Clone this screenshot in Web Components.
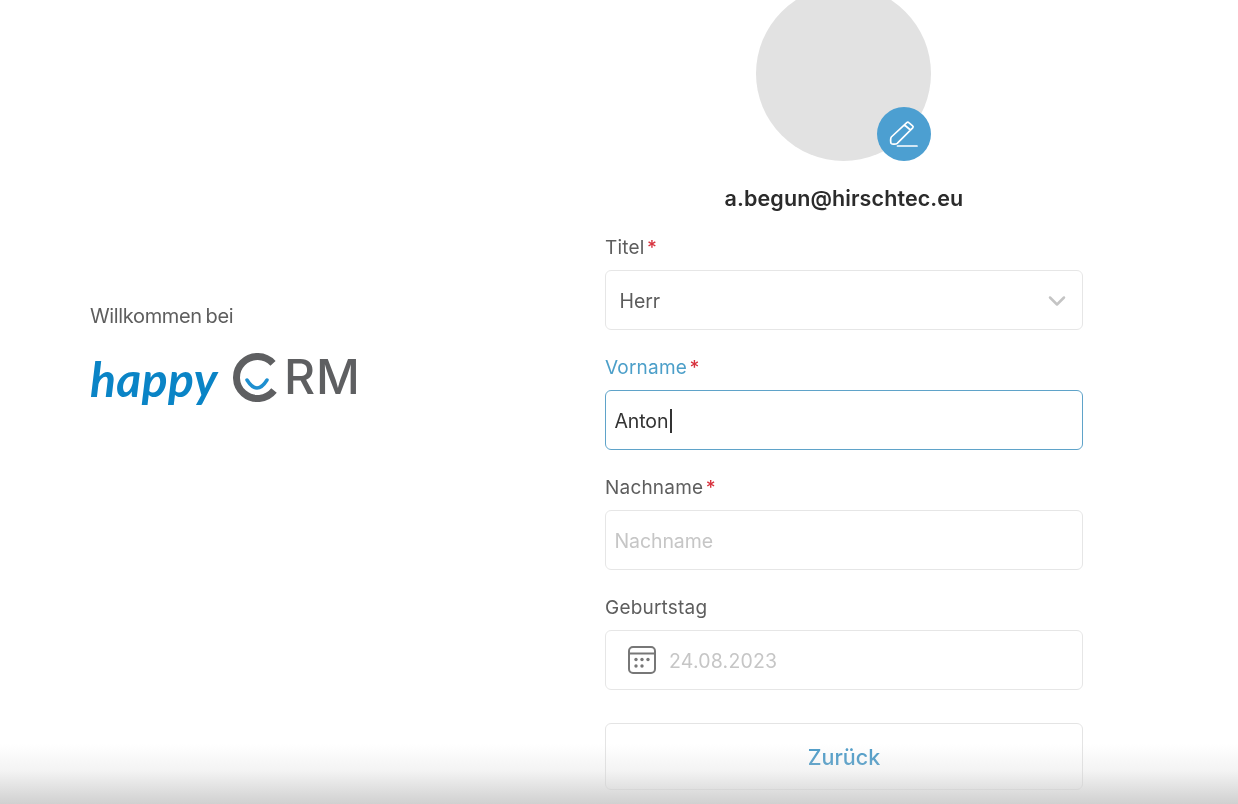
<!DOCTYPE html>
<html lang="de"><head><meta charset="utf-8"><title>happy CRM</title>
<style>
html,body{margin:0;height:100%;background:#fff;overflow:hidden}
body{font-family:Inter,"Noto Sans",sans-serif;color:#555}
</style></head><body>
<crm-page>
  <brand-panel slot="left"></brand-panel>
  <avatar-edit slot="right" email="a.begun@hirschtec.eu"></avatar-edit>
  <form-field slot="right" label="Titel" required kind="select" value="Herr"></form-field>
  <form-field slot="right" label="Vorname" required kind="focus" value="Anton"></form-field>
  <form-field slot="right" label="Nachname" required kind="placeholder" value="Nachname"></form-field>
  <form-field slot="right" label="Geburtstag" kind="date" value="24.08.2023"></form-field>
  <back-button slot="right">Zurück</back-button>
</crm-page>
<script>
function def(name, html){
  customElements.define(name, class extends HTMLElement{
    connectedCallback(){
      if(this.shadowRoot) return;
      this.attachShadow({mode:'open'}).innerHTML = typeof html==='function'?html(this):html;
    }
  });
}
def('crm-page',`<style>
:host{display:flex;width:1238px;height:804px;position:relative;overflow:hidden;background:#fff}
.l{flex:0 0 515px;padding:304px 0 0 90px;filter:blur(.3px)}
.r{flex:0 0 478px;display:flex;flex-direction:column;margin-top:-14px;filter:blur(.3px)}
.fade{position:absolute;left:0;right:0;bottom:0;height:60px;pointer-events:none;
background:linear-gradient(to bottom,rgba(208,208,208,0),rgba(208,208,208,.25) 45%,rgba(208,208,208,1))}
</style><div class="l"><slot name="left"></slot></div><div class="r"><slot name="right"></slot></div><div class="fade"></div>`);

def('brand-panel',`<style>
:host{display:block;width:300px}
.w{font-size:20px;line-height:24px;color:#5e5e5e;letter-spacing:-.35px;word-spacing:-1.500px}
.logo{display:flex;align-items:flex-start;height:60px;margin-top:20px}
.h{font:italic 700 48px/60px "Lato",sans-serif;color:#0a84c6;width:143px;letter-spacing:.4px;margin-top:1px}
svg{flex:none;display:block;margin-top:5px}
.rm{font:500 48px/60px Inter,sans-serif;color:#5e5f61;letter-spacing:1px;margin-left:5px;margin-top:-1px}
</style><div class="w">Willkommen bei</div>
<div class="logo"><span class="h">happy</span>
<svg width="46" height="50" viewBox="0 0 46 50"><path d="M40 10.300A21 21 0 1 0 41 37.500" fill="none" stroke="#5e5f61" stroke-width="7"/><path d="M14 27q10 16 20 0" fill="none" stroke="#1e8fd0" stroke-width="3.500" stroke-linecap="round"/></svg>
<span class="rm">RM</span></div>`);

def('avatar-edit',el=>`<style>
:host{display:flex;flex-direction:column;align-items:center;height:251px}
.c{width:175px;height:175px;border-radius:50%;background:#e2e2e2;position:relative;margin-right:1px}
.b{position:absolute;right:0;bottom:0;width:54px;height:54px;border-radius:50%;background:#4c9fd1;display:flex;align-items:center;justify-content:center}
.m{margin-top:24px;font-size:21.500px;line-height:26px;font-weight:600;color:#2b2b2b;letter-spacing:.1px}
</style><div class="c"><div class="b"><svg width="30" height="30" viewBox="0 0 30 30" fill="none" stroke="#fff" stroke-width="1.700" stroke-linecap="round" stroke-linejoin="round"><path d="M2.300 18 17.800 3.600a1.500 1.500 0 0 1 2 0l3.800 3.200a1.500 1.500 0 0 1 .1 2.100L8.200 24.300c-1.200 1-5 1.200-6 .2-.8-.9-.8-5.500.1-6.500zM15.500 6l6 5"/><path d="M8.500 27H28"/></svg></div></div>
<div class="m">${el.getAttribute('email')}</div>`);

def('form-field',el=>{
 const k=el.getAttribute('kind'),v=el.getAttribute('value'),req=el.hasAttribute('required');
 let inner='';
 if(k==='select') inner=`<span class="v sel">${v}</span><svg class="chev" width="18" height="12" viewBox="0 0 18 12" fill="none" stroke="#c4c4c4" stroke-width="2.500" stroke-linecap="round" stroke-linejoin="round"><path d="M2 2.500l7 7 7-7"/></svg>`;
 if(k==='focus') inner=`<span class="v foc">${v}</span><i class="caret"></i>`;
 if(k==='placeholder') inner=`<span class="v ph">${v}</span>`;
 if(k==='date') inner=`<svg class="cal" width="28" height="28" viewBox="0 0 28 28" fill="none" stroke="#777" stroke-width="2"><rect x="1" y="1" width="26" height="26" rx="4"/><path d="M1 7.500h26"/><g fill="#777" stroke="none"><circle cx="8" cy="13.500" r="1.700"/><circle cx="14" cy="13.500" r="1.700"/><circle cx="20" cy="13.500" r="1.700"/><circle cx="8" cy="20" r="1.700"/><circle cx="14" cy="20" r="1.700"/></g></svg><span class="v ph date">${v}</span>`;
 return `<style>
:host{display:block;height:120px}
label{display:block;font-size:19px;line-height:22px;height:33px;color:${k==='focus'?'#4c9fc9':'#5e5e5e'};letter-spacing:.2px}
b{color:#d8333f;font-weight:500;margin-left:2.500px}
.box{box-sizing:border-box;height:60px;border:1.500px solid ${k==='focus'?'#5fa3c9':'#e6e6e6'};border-radius:6px;display:flex;align-items:center;padding:2px 8.500px 0;background:#fff}
.v{font-size:19.500px;letter-spacing:-.1px}
.sel{color:#5c5c5c;margin-left:5px;flex:1}
.foc{color:#333}
.ph{color:#c6c6c6}
.date{margin-left:13px;letter-spacing:.2px}
.chev{margin-right:8px}
.caret{display:block;width:1.700px;height:24px;background:#333;margin-left:2px}
.cal{margin-left:13.500px;margin-top:-2px;flex:none}
</style><label>${el.getAttribute('label')}${req?'<b>*</b>':''}</label><div class="box">${inner}</div>`;});

def('back-button',`<style>
:host{display:flex;box-sizing:border-box;height:67px;margin-top:6px;border:1.500px solid #e4e4e4;border-radius:6px;align-items:center;justify-content:center;font-size:21.500px;font-weight:500;color:#4c9bc8;background:#fff}
</style><slot></slot>`);
</script>
</body></html>
